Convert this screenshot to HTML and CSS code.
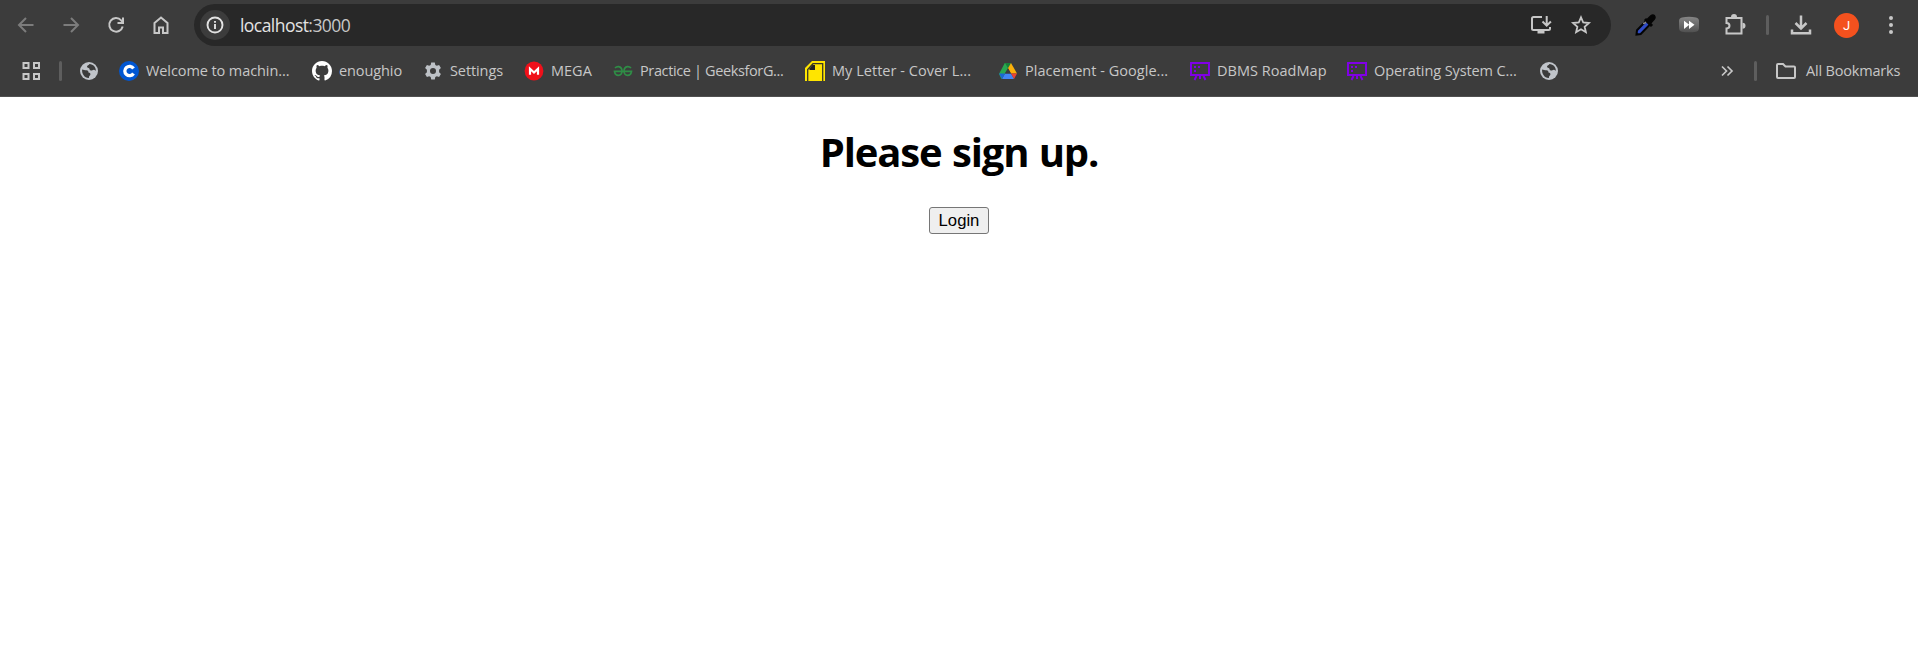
FILE: index.html
```html
<!DOCTYPE html>
<html lang="en">
<head>
<meta charset="utf-8">
<title>localhost:3000</title>
<link rel="stylesheet" href="styles.css">
</head>
<body>
<svg class="defs" width="0" height="0">
  <symbol id="globe" viewBox="0 0 20 20">
    <circle cx="10" cy="10" r="9" fill="#c0c4ca"/>
    <path d="M3.1 8.4c1.4.2 2.6.9 4.400.9 1.500 0 2 1 1.900 2.200 1.400 0 2.200.7 2 2.100-.2 1-1.500 1.300-1.500 3.300C5.600 17.100 2.700 12.800 3.100 8.400zM10.500 3.100c-.5 1.200-2.300 1-2.500 2.500-.1 1.300 1.700 1.100 2.300 2 .6 1 .2 2 1.700 2 1.400 0 1.800-1 3-.8 1 .2 1.200 1 1.900.9C16.700 6.100 14.400 3.400 10.500 3.100z" fill="#3c3c3c"/>
  </symbol>
  <symbol id="board" viewBox="0 0 20 20">
    <path d="M1 2h18v12H1z" fill="none" stroke="#8000e6" stroke-width="2"/>
    <path d="M4 5h2v2H4zM8 5h2v2H8zM4 9h2v2H4z" fill="#8000e6"/>
    <path d="M6.500 15l-2 4M13.500 15l2 4M10 15v3" stroke="#8000e6" stroke-width="2"/>
  </symbol>
</svg>
<header class="browser">
  <div class="toolbar">
    <nav class="nav">
      <svg class="dim" width="20" height="20" viewBox="0 0 20 20"><path d="M17.500 10H3.500M10 3l-7 7 7 7"/></svg>
      <svg class="dim" width="20" height="20" viewBox="0 0 20 20"><path d="M2.500 10h14M10 3l7 7-7 7"/></svg>
      <svg width="20" height="20" viewBox="0 0 20 20"><path d="M16.700 11.500A6.800 6.800 0 1 1 15.200 5.300L17 7.500M17 2.500v5.600h-5.500"/></svg>
      <svg width="20" height="20" viewBox="0 0 20 20"><path d="M3.500 8L10 2.500 16.500 8v10H12v-5.500H8V18H3.500z"/></svg>
    </nav>
    <div class="omnibox">
      <span class="site-info"><svg width="18" height="18" viewBox="0 0 18 18"><circle cx="9" cy="9" r="7.500"/><path d="M9 8v5M9 5v1.800"/></svg></span>
      <span class="url">localhost<span class="port">:3000</span></span>
      <span class="omni-icons">
        <svg width="22" height="22" viewBox="0 0 22 22"><path d="M12 3H3.500q-1.500 0-1.500 1.500v10Q2 16 3.500 16h15q1.500 0 1.500-1.500V13M16.700 2v9M12.500 7.500l4.200 4.200 4.200-4.200"/><path d="M7.500 17h7v2.500h-7z" fill="#c7c7c7" stroke="none"/></svg>
        <svg width="22" height="22" viewBox="0 0 22 22"><path stroke-width="1.800" d="M11 3.300l2.250 5.200 5.650.5-4.280 3.720 1.270 5.530L11 15.300l-4.890 2.950 1.270-5.530L3.100 9l5.650-.5z"/></svg>
      </span>
    </div>
    <div class="extensions">
      <svg class="picker" width="22" height="24" viewBox="0 0 22 24"><path d="M12.500 7.500L3 17.300 2.500 21.500 6.700 21 16 11.500z" fill="#2f4bc4" stroke="#050505" stroke-width="2"/><path d="M12.500 8l-1.500 2-2 .5" fill="none" stroke="#888" stroke-width="1.500"/><path d="M11 6l7 7" stroke="#050505" stroke-width="3"/><path d="M13 7l4-4q2-1.500 3.300 0 1 1.400-.3 3l-4 4.500z" fill="#050505" stroke="#050505"/></svg>
      <svg class="forward" width="22" height="18" viewBox="0 0 22 18"><defs><linearGradient id="gray" x2="0" y2="1"><stop stop-color="#858585"/><stop offset="1" stop-color="#515151"/></linearGradient></defs><path d="M4 1.500Q11 .2 18 1.500 21 2 21 5v7q0 3-3 3.700-7 1-14 0-3-.7-3-3.700V5q0-3 3-3.500z" fill="url(#gray)" stroke="none"/><path d="M6 4.700l5 3.800V4.700l5.500 4.100L11 12.900V9.100l-5 3.800z" fill="#fff" stroke="none"/></svg>
      <svg class="puzzle" width="24" height="24" viewBox="0 0 24 24"><path d="M3.500 5h15v15.500h-15v-5q3-.2 3-2.700t-3-2.700z"/><path d="M8 4a3 3 0 0 1 6 0zM19.500 9.700a3 3 0 0 1 0 6z" fill="#c7c7c7" stroke="none"/></svg>
      <i class="divider"></i>
      <svg class="download" width="24" height="24" viewBox="0 0 24 24"><path stroke-width="2.500" d="M12 2.500v13M6.500 10l5.500 5.500 5.500-5.500M3 16.500v3.800h18v-3.800"/></svg>
      <span class="avatar">J</span>
      <svg class="dots" width="6" height="22" viewBox="0 0 6 22"><g fill="#c7c7c7" stroke="none"><circle cx="3" cy="4" r="2"/><circle cx="3" cy="11" r="2"/><circle cx="3" cy="18" r="2"/></g></svg>
    </div>
  </div>
  <div class="bookmarks">
    <svg class="apps" width="20" height="20" viewBox="0 0 20 20"><path d="M2.500 2h5v5h-5zM13 2h5v5h-5zM2.500 13h5v5h-5zM13 13h5v5h-5z"/></svg>
    <i class="divider"></i>
    <a class="bm globe"><svg><use href="#globe"/></svg></a>
    <a class="bm w193"><svg viewBox="0 0 20 20"><circle cx="10" cy="10" r="10" fill="#0056d2" stroke="none"/><path d="M14.500 7.500A4.700 4.700 0 1 0 14.500 12.500" stroke="#fff" stroke-width="3.300"/></svg><span class="t-welcome">Welcome to machin...</span></a>
    <a class="bm w111"><svg viewBox="0 0 16 16"><path fill="#fff" stroke="none" d="M8 0C3.580 0 0 3.580 0 8c0 3.540 2.290 6.530 5.470 7.590.4.070.55-.17.55-.38 0-.19-.01-.82-.01-1.490-2.010.37-2.530-.49-2.690-.94-.09-.23-.48-.94-.82-1.130-.28-.15-.68-.52-.01-.53.63-.01 1.080.58 1.230.82.72 1.210 1.870.87 2.330.66.07-.52.28-.87.51-1.070-1.780-.2-3.640-.89-3.640-3.950 0-.87.31-1.590.82-2.150-.08-.2-.36-1.020.08-2.120 0 0 .67-.21 2.200.82.64-.18 1.320-.27 2-.27s1.360.09 2 .27c1.530-1.040 2.200-.82 2.200-.82.44 1.100.16 1.920.08 2.120.51.56.82 1.270.82 2.150 0 3.070-1.870 3.750-3.650 3.950.29.25.54.73.54 1.480 0 1.070-.01 1.930-.01 2.200 0 .21.15.46.55.38A8.010 8.010 0 0 0 16 8c0-4.420-3.580-8-8-8z"/></svg><span class="t-enough">enoughio</span></a>
    <a class="bm w101"><svg viewBox="0 0 20 20"><g fill="#bdc1c6" stroke="none"><path fill-rule="evenodd" d="M8.200 1.500h3.600l.5 2.400 1.500.9 2.300-.8 1.800 3.100-1.800 1.700v2.400l1.800 1.700-1.800 3.100-2.300-.8-1.500.9-.5 2.400H8.200l-.5-2.400-1.500-.9-2.300.8-1.800-3.100 1.800-1.700V8.800L2.100 7.100 3.900 4l2.300.8 1.500-.9zM10 7a3 3 0 1 0 0 6 3 3 0 0 0 0-6z"/></g></svg><span class="t-settings">Settings</span></a>
    <a class="bm w89"><svg viewBox="0 0 20 20"><circle cx="10" cy="10" r="9.400" fill="#f0101a" stroke="none"/><path d="M6 13.700V7.800l4 3.700 4-3.700v5.900" stroke="#fff" stroke-width="2.200"/></svg><span class="t-mega">MEGA</span></a>
    <a class="bm w192"><svg viewBox="0 0 20 20"><path d="M2 7q1.500-1.500 3.600-1.300Q9 6.200 9 10.300q-.2 3.900-3.600 4.100-3.300 0-3.900-4h17q-.6 4-3.900 4-3.400-.2-3.600-4.100 0-4.100 3.400-4.600Q16.500 5.500 18 7" stroke="#2f8d46" stroke-width="1.700"/></svg><span class="t-gfg">Practice | GeeksforG...</span></a>
    <a class="bm w193"><svg viewBox="0 0 20 20"><path d="M0 20V7l7-7h13v20z" fill="#ffe500" stroke="none"/><path d="M2.700 20V8.500L8 2.700h9.700V20" stroke="#393925" stroke-width="1.300"/><path d="M4.500 9V7.500L7.500 4H10v5z" fill="#242424" stroke="none"/></svg><span class="t-letter">My Letter - Cover L...</span></a>
    <a class="bm w192"><svg viewBox="0 0 20 20"><g stroke="none"><path d="M6.800 2H13l-3 5.200-4.700 8-1.800 3L1 13z" fill="#29a850"/><path d="M7 2h6l-3 5.200z" fill="#188038"/><path d="M13 2l6 10.500h-6L10 7.200z" fill="#fbb00a"/><path d="M7 12.500h6l3 5.500H4z" fill="#4285f4"/><path d="M1 12.500h6L4 18z" fill="#1967d2"/><path d="M13 12.500h6L16 18z" fill="#ea4335"/><path d="M10 7.300L7 12.500h6z" fill="#3c3c3c"/></g></svg><span class="t-place">Placement - Google...</span></a>
    <a class="bm w157"><svg><use href="#board"/></svg><span class="t-dbms">DBMS RoadMap</span></a>
    <a class="bm w192"><svg><use href="#board"/></svg><span class="t-os">Operating System C...</span></a>
    <a class="bm globe"><svg><use href="#globe"/></svg></a>
    <div class="all">
      <svg width="14" height="12" viewBox="0 0 14 12"><path stroke-width="1.700" d="M2 1.500L6.500 6 2 10.500M7.500 1.500L12 6l-4.500 4.500"/></svg>
      <i class="divider"></i>
      <svg class="folder" width="22" height="18" viewBox="0 0 22 18"><path d="M3 2h5l2.500 2.500H19q1 0 1 1V15q0 1-1 1H3q-1 0-1-1V3q0-1 1-1z"/></svg>
      <span class="t-all">All Bookmarks</span>
    </div>
  </div>
</header>
<main class="page">
  <h1>Please sign up.</h1>
  <button type="button">Login</button>
</main>
</body>
</html>
```
FILE: styles.css
```css
* { box-sizing: border-box; }
body { margin: 0; background: #fff; font-family: "Open Sans", "Noto Sans", sans-serif; }
.defs { display: block; }
svg { flex: none; fill: none; stroke: #c7c7c7; stroke-width: 2; }
.bm use { stroke: none; }
.browser { height: 97px; background: #3c3c3c; border-bottom: 1px solid #505050; }
.toolbar { display: flex; height: 50px; align-items: center; }
.nav { display: flex; gap: 25px; padding-left: 16px; width: 194px; }
.nav .dim { stroke: #7c7c7c; }
.omnibox { display: flex; align-items: center; width: 1417px; height: 42px; padding: 0 19px 0 6px; border-radius: 21px; background: #282828; }
.site-info { display: grid; place-items: center; width: 30px; height: 30px; border-radius: 50%; background: #3c3c3c; }
.site-info svg { stroke: #e3e3e3; stroke-width: 1.900; }
.url { margin-left: 10px; font-size: 17.500px; letter-spacing: -.55px; color: #e3e3e3; line-height: 24px; }
.port { color: #c7c7c7; }
.omni-icons { display: flex; gap: 18px; margin-left: auto; }
.extensions { display: flex; align-items: center; flex: 1; padding-left: 23px; }
.forward { margin-left: 22px; }
.puzzle { margin-left: 23px; }
.divider { flex: none; width: 3px; height: 20px; border-radius: 2px; background: #5e5e5e; }
.extensions .divider { margin-left: 19px; }
.download { margin-left: 20px; }
.avatar { display: grid; place-items: center; width: 25px; height: 25px; margin-left: 21px; border-radius: 50%; background: #f4511e; color: #fff; font: 13px/25px Roboto, sans-serif; }
.dots { margin-left: 29px; }
.bookmarks { display: flex; align-items: center; height: 42px; padding-left: 21px; color: #c7c7c7; font-size: 14.500px; line-height: 22px; white-space: nowrap; }
.apps { margin-right: 18px; }
.bookmarks > .divider { margin-right: 17px; }
.bm { display: flex; align-items: center; gap: 7px; flex: none; }
.bm svg { width: 20px; height: 20px; }
.globe { width: 40px; }
.w89 { width: 89px; }
.w101 { width: 101px; }
.w111 { width: 111px; }
.w157 { width: 157px; }
.w192 { width: 192px; }
.w193 { width: 193px; }
.all { display: flex; align-items: center; width: 198px; margin-left: auto; }
.all .divider { margin-left: 20px; }
.folder { margin: 0 9px 0 18px; }
.t-welcome { letter-spacing: -.09px; }
.t-enough { letter-spacing: -.1px; }
.t-settings { letter-spacing: -.1px; }
.t-mega { letter-spacing: 0; }
.t-gfg { letter-spacing: -.37px; }
.t-letter, .t-place { letter-spacing: .03px; }
.t-dbms { letter-spacing: .03px; }
.t-os { letter-spacing: -.1px; }
.t-all { letter-spacing: -.18px; }
.page { display: flex; flex-direction: column; align-items: center; padding-top: 26px; }
h1 { margin: 0 0 27px; font-size: 40px; line-height: 57px; font-weight: 700; letter-spacing: -1.150px; word-spacing: 1.200px; color: #000; }
button { width: 60px; height: 27px; padding: 0; border: 1px solid #767676; border-radius: 3px; background: #efefef; color: #000; font: 16.667px "Liberation Sans", Arial, sans-serif; }
```
